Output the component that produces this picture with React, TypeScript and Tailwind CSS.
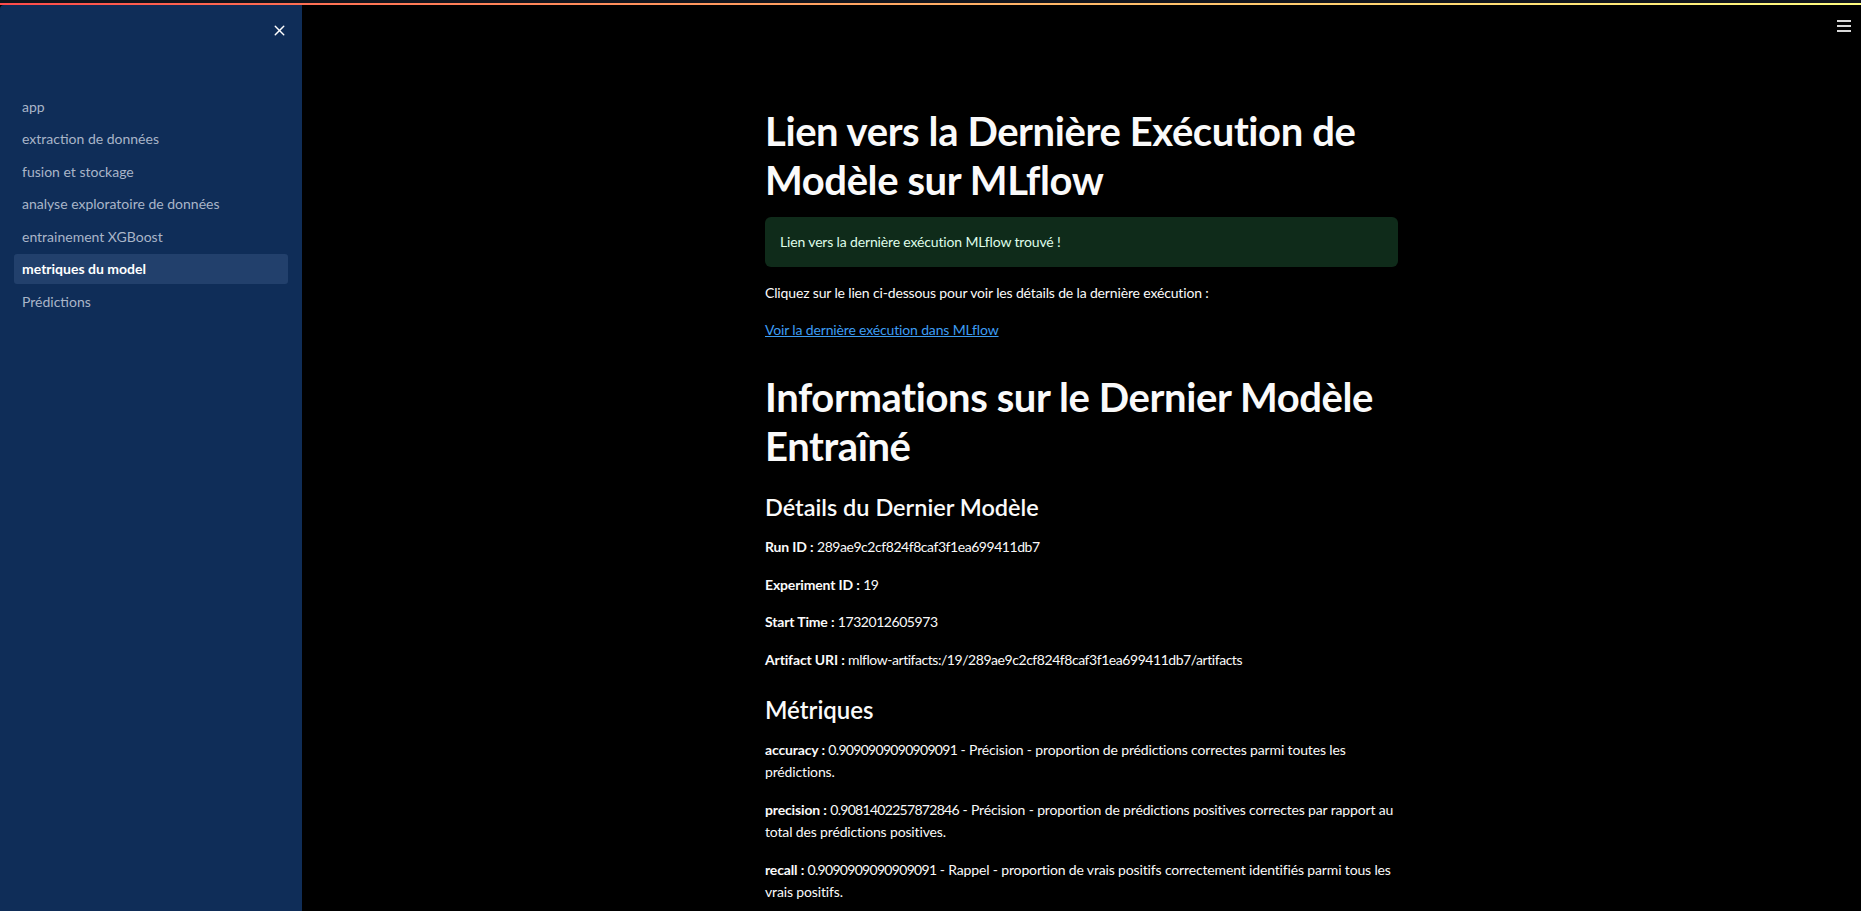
import { X } from 'lucide-react'

const pages = [
  'app',
  'extraction de données',
  'fusion et stockage',
  'analyse exploratoire de données',
  'entrainement XGBoost',
  'metriques du model',
  'Prédictions',
]

const details = [
  ['Run ID', '289ae9c2cf824f8caf3f1ea699411db7'],
  ['Experiment ID', '19'],
  ['Start Time', '1732012605973'],
  ['Artifact URI', 'mlflow-artifacts:/19/289ae9c2cf824f8caf3f1ea699411db7/artifacts'],
]

const metrics = [
  ['accuracy', '0.9090909090909091', 'Précision - proportion de prédictions correctes parmi toutes les prédictions.'],
  ['precision', '0.9081402257872846', 'Précision - proportion de prédictions positives correctes par rapport au total des prédictions positives.'],
  ['recall', '0.9090909090909091', 'Rappel - proportion de vrais positifs correctement identifiés parmi tous les vrais positifs.'],
]

const Sidebar = () => {
  return (
    <aside className="w-[302px] shrink-0 h-full bg-[#0f2d58] rounded-tl-[4px] flex flex-col">
      <div className="flex justify-end pr-[14px] pt-[17px] h-[86px]">
        <X className="w-[17px] h-[17px] text-white" strokeWidth={2} />
      </div>
      <nav className="flex flex-col gap-[2.5px] px-[14px]">
        {pages.map((p) => {
          const active = p === 'metriques du model'
          return (
            <div
              key={p}
              className={
                active
                  ? 'h-[30px] px-[8px] flex items-center rounded-[3px] bg-[#22406c] text-white font-bold text-[14px]'
                  : 'h-[30px] px-[8px] flex items-center text-[#a9b5c8] text-[14px]'
              }
            >
              {p}
            </div>
          )
        })}
      </nav>
    </aside>
  )
}

const App = () => {
  return (
    <div className="w-screen h-screen overflow-hidden bg-black flex flex-col font-['Lato',sans-serif] text-[#fafafa]">
      <div className="h-[3px] bg-[#10141d] shrink-0"></div>
      <div className="h-[2px] shrink-0 bg-gradient-to-r from-[#ff4b4b] to-[#fffd80]"></div>
      <div className="flex flex-1 min-h-0 relative">
        <Sidebar />

        <main className="flex-1 min-w-0 overflow-hidden">
          <div className="w-[633px] mx-auto pt-[102px] text-[14px] leading-[22px] tracking-[-0.15px]">
            <h1 className="text-[40px] leading-[49px] font-bold tracking-[-0.01em]">
              Lien vers la Dernière Exécution de Modèle sur MLflow
            </h1>

            <div className="mt-[12px] h-[50px] rounded-[6px] bg-[#0f2b1a] text-[#dffde9] flex items-center px-[15px]">
              Lien vers la dernière exécution MLflow trouvé !
            </div>

            <p className="mt-[15px]">Cliquez sur le lien ci-dessous pour voir les détails de la dernière exécution :</p>

            <p className="mt-[15px]">
              <a href="#" className="text-[#3d9df3] underline">
                Voir la dernière exécution dans MLflow
              </a>
            </p>

            <h1 className="mt-[32px] text-[40px] leading-[49px] font-bold tracking-[-0.01em]">
              Informations sur le Dernier Modèle Entraîné
            </h1>

            <h3 className="mt-[22px] text-[23.5px] leading-[28px] font-semibold tracking-normal">Détails du Dernier Modèle</h3>

            <div className="mt-[15px] flex flex-col gap-[15.5px]">
              {details.map(([k, v]) => (
                <p key={k}>
                  <b>{k} :</b> <span className="tracking-[-0.45px]">{v}</span>
                </p>
              ))}
            </div>

            <h3 className="mt-[25px] text-[24px] leading-[28px] font-semibold tracking-normal">Métriques</h3>

            <div className="mt-[15px] flex flex-col gap-[16px]">
              {metrics.map(([k, n, d]) => (
                <p key={k}>
                  <b>{k} :</b> <span className="tracking-[-0.7px]">{n}</span> - {d}
                </p>
              ))}
            </div>
          </div>
        </main>

        <button className="absolute top-[14px] right-[10px] w-[14px] h-[14px] flex flex-col justify-between py-[1px]">
          <span className="block h-[2px] bg-[#d8d8d8]"></span>
          <span className="block h-[2px] bg-[#d8d8d8]"></span>
          <span className="block h-[2px] bg-[#d8d8d8]"></span>
        </button>
      </div>
    </div>
  )
}

export default App
